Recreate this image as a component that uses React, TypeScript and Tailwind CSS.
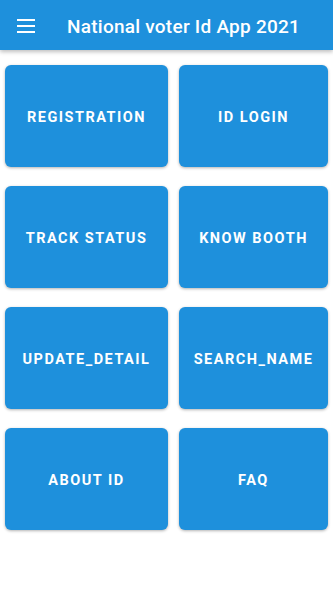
import React from "react";

const items = [
  "REGISTRATION",
  "ID LOGIN",
  "TRACK STATUS",
  "KNOW BOOTH",
  "UPDATE_DETAIL",
  "SEARCH_NAME",
  "ABOUT ID",
  "FAQ",
];

export default function App() {
  return (
    <div className="w-[333px] h-[592px] bg-white overflow-hidden" style={{ fontFamily: "Roboto, 'Noto Sans', sans-serif" }}>
      <header className="h-[50px] bg-[#1e90dc] flex items-center shadow-[0_2px_4px_rgba(0,0,0,0.25)] relative z-10">
        <div className="pl-[17px] w-[67px] pt-[1px]">
          <svg width="18" height="14" viewBox="0 0 18 14" className="block">
            <rect x="0" y="0" width="18" height="2" fill="#ffffff" />
            <rect x="0" y="6" width="18" height="2" fill="#ffffff" />
            <rect x="0" y="12" width="18" height="2" fill="#ffffff" />
          </svg>
        </div>
        <h1 className="text-white text-[19px] font-medium tracking-[0.25px] leading-none pt-[2px]">National voter Id App 2021</h1>
      </header>
      <main className="grid grid-cols-[163px_149px] gap-x-[11px] gap-y-[19.5px] pl-[5px] pt-[15px]">
        {items.map((t) => (
          <div
            key={t}
            className="h-[101.5px] rounded-[6px] bg-[#1e90dc] shadow-[0_1px_3px_rgba(0,0,0,0.3)] flex items-center justify-center"
          >
            <span className="text-white text-[14.5px] font-bold tracking-[1.5px] leading-none pt-[4px]">{t}</span>
          </div>
        ))}
      </main>
    </div>
  );
}
